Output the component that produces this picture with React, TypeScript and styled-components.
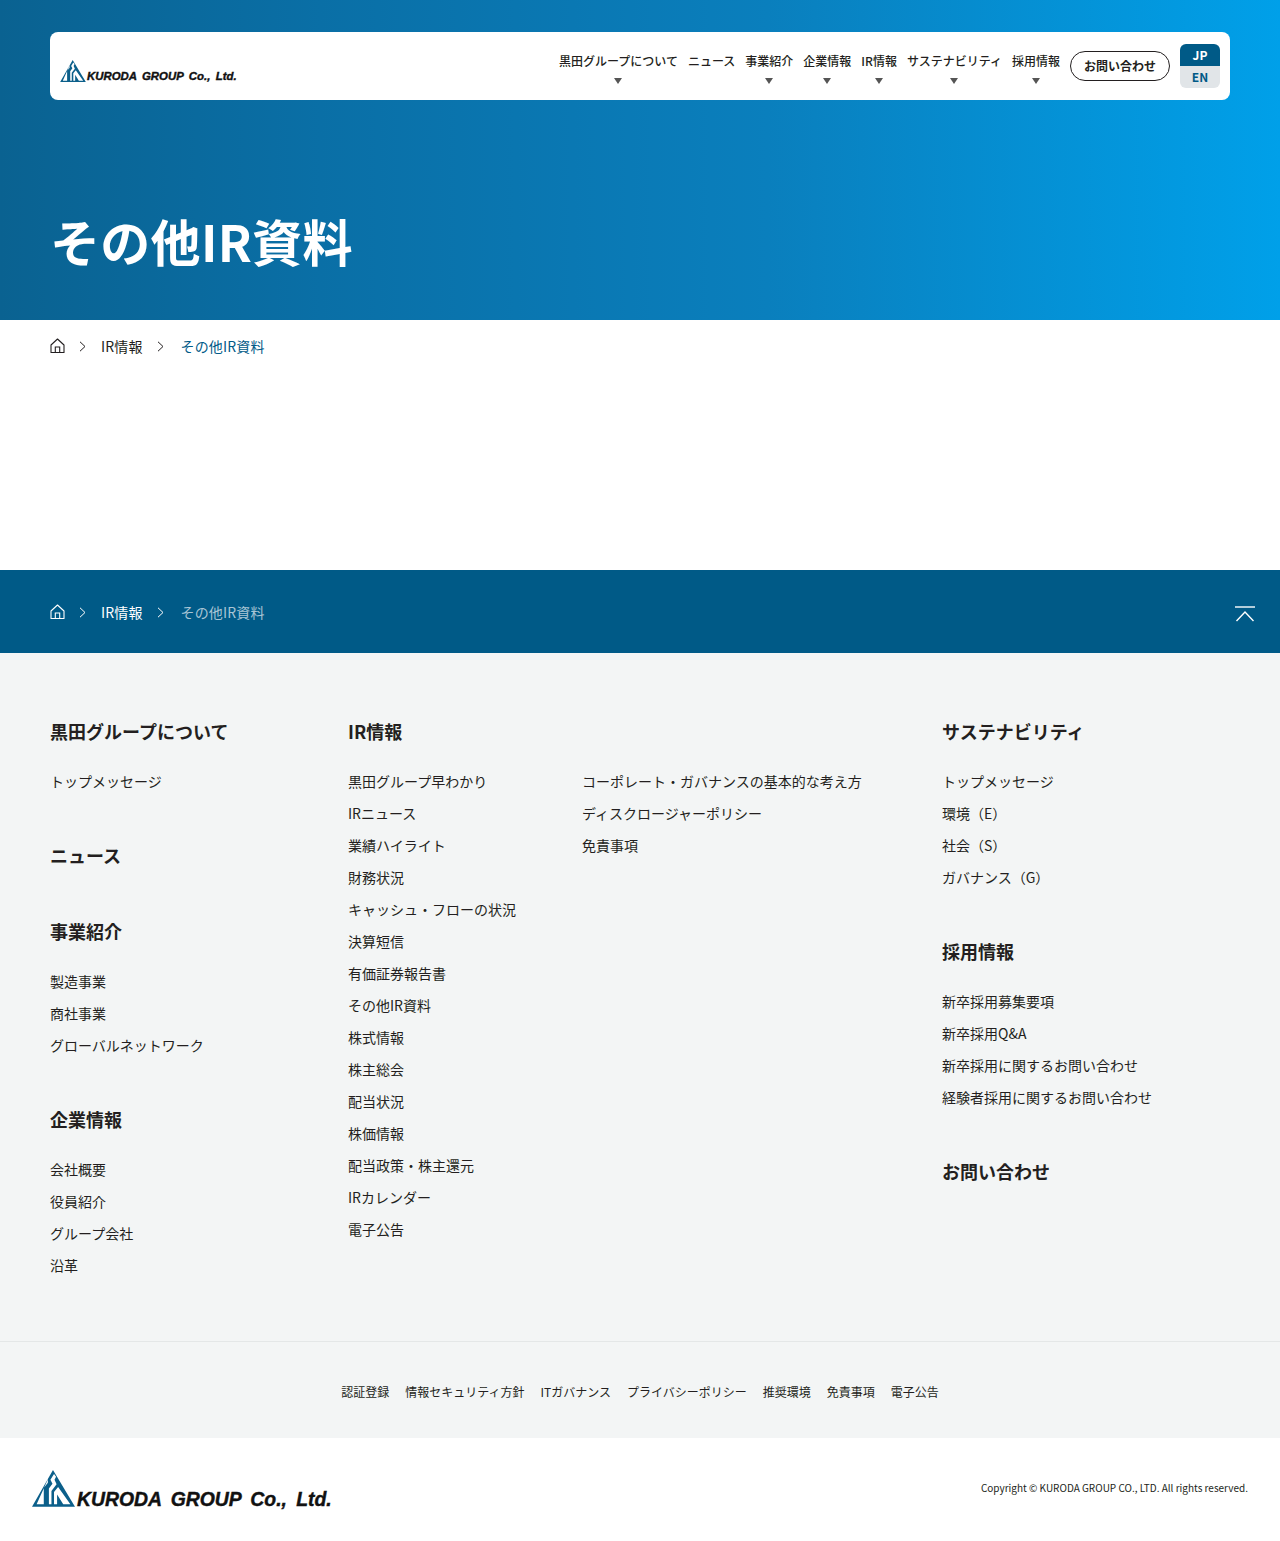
import React from 'react';
import styled, { createGlobalStyle } from 'styled-components';

const GlobalStyle = createGlobalStyle`
  html, body {
    margin: 0;
    padding: 0;
    background: #fff;
    font-family: 'Noto Sans CJK JP', 'Noto Sans', sans-serif;
    color: #231f20;
  }
  * {
    box-sizing: border-box;
  }
  ul {
    list-style: none;
    margin: 0;
    padding: 0;
  }
  a {
    color: inherit;
    text-decoration: none;
  }
`;

type NavItem = { label: string; hasMenu: boolean };

const navItems: NavItem[] = [
  { label: '黒田グループについて', hasMenu: true },
  { label: 'ニュース', hasMenu: false },
  { label: '事業紹介', hasMenu: true },
  { label: '企業情報', hasMenu: true },
  { label: 'IR情報', hasMenu: true },
  { label: 'サステナビリティ', hasMenu: true },
  { label: '採用情報', hasMenu: true }
];

type FooterSection = { title: string; links: string[] };

const leftSections: FooterSection[] = [
  { title: '黒田グループについて', links: ['トップメッセージ'] },
  { title: 'ニュース', links: [] },
  {
    title: '事業紹介',
    links: ['製造事業', '商社事業', 'グローバルネットワーク']
  },
  {
    title: '企業情報',
    links: ['会社概要', '役員紹介', 'グループ会社', '沿革']
  }
];

const irLinks = [
  '黒田グループ早わかり',
  'IRニュース',
  '業績ハイライト',
  '財務状況',
  'キャッシュ・フローの状況',
  '決算短信',
  '有価証券報告書',
  'その他IR資料',
  '株式情報',
  '株主総会',
  '配当状況',
  '株価情報',
  '配当政策・株主還元',
  'IRカレンダー',
  '電子公告'
];

const irLinks2 = [
  'コーポレート・ガバナンスの基本的な考え方',
  'ディスクロージャーポリシー',
  '免責事項'
];

const rightSections: FooterSection[] = [
  {
    title: 'サステナビリティ',
    links: ['トップメッセージ', '環境（E）', '社会（S）', 'ガバナンス（G）']
  },
  {
    title: '採用情報',
    links: [
      '新卒採用募集要項',
      '新卒採用Q&A',
      '新卒採用に関するお問い合わせ',
      '経験者採用に関するお問い合わせ'
    ]
  },
  { title: 'お問い合わせ', links: [] }
];

const subLinks = [
  '認証登録',
  '情報セキュリティ方針',
  'ITガバナンス',
  'プライバシーポリシー',
  '推奨環境',
  '免責事項',
  '電子公告'
];

function LogoMark({ size }: { size: number }) {
  return (
    <svg width={size} height={size * 0.857} viewBox="0 0 42 36" aria-hidden="true">
      <path
        fill="#0b5f8a"
        fillRule="evenodd"
        d="M20.5 0 L42 36 H0 Z M15.5 9 L4.5 33.5 H11.5 V17.5 L15.5 12.5 Z M21.5 4 L18 9.5 L20 13.5 L16.5 18 V33.5 H19 V20.5 L24 14 L22 9.5 L23.5 6.5 Z M25.5 16.5 L21.5 21.5 V33.5 H24.5 V24 L30.5 33.5 H37.5 Z"
      />
    </svg>
  );
}

function HomeIcon() {
  return (
    <svg width="15" height="16" viewBox="0 0 15 16" fill="none" stroke="currentColor" strokeWidth="1.1" aria-hidden="true">
      <path d="M1 7 L7.5 1 L14 7 V14.5 H1 Z" strokeLinejoin="round" />
      <path d="M5.3 14.5 V9 H9.7 V14.5" />
    </svg>
  );
}

function Chevron() {
  return (
    <svg width="7" height="11" viewBox="0 0 7 11" fill="none" stroke="currentColor" strokeWidth="1" aria-hidden="true">
      <path d="M1 0.8 L6 5.5 L1 10.2" />
    </svg>
  );
}

function Breadcrumb({ inverse }: { inverse?: boolean }) {
  return (
    <Crumbs $inverse={inverse}>
      <HomeLink href="#">
        <HomeIcon />
      </HomeLink>
      <CrumbSep>
        <Chevron />
      </CrumbSep>
      <a href="#">IR情報</a>
      <CrumbSep>
        <Chevron />
      </CrumbSep>
      <CrumbCurrent $inverse={inverse}>その他IR資料</CrumbCurrent>
    </Crumbs>
  );
}

function LinkSection({ title, links }: FooterSection) {
  const empty = links.length === 0;
  return (
    <Section $empty={empty}>
      <SectionTitle $empty={empty}>{title}</SectionTitle>
      {!empty && (
        <LinkList>
          {links.map((l) => (
            <li key={l}>
              <a href="#">{l}</a>
            </li>
          ))}
        </LinkList>
      )}
    </Section>
  );
}

export default function App() {
  return (
    <>
      <GlobalStyle />
      <Hero>
        <Header>
          <HeaderLogo href="#">
            <LogoMark size={26} />
            <LogoText $size={11.4}>KURODA GROUP Co., Ltd.</LogoText>
          </HeaderLogo>
          <Nav>
            {navItems.map((item) => (
              <NavLink key={item.label} href="#">
                <span>{item.label}</span>
                {item.hasMenu && <Caret />}
              </NavLink>
            ))}
            <ContactButton href="#">お問い合わせ</ContactButton>
            <LangSwitch>
              <LangItem $active>JP</LangItem>
              <LangItem>EN</LangItem>
            </LangSwitch>
          </Nav>
        </Header>
        <PageTitle>その他IR資料</PageTitle>
      </Hero>

      <TopCrumbs>
        <Breadcrumb />
      </TopCrumbs>

      <FooterBar>
        <Breadcrumb inverse />
        <ToTop href="#" aria-label="ページトップへ">
          <svg width="22" height="16" viewBox="0 0 22 16" fill="none" stroke="#fff" strokeWidth="1.4">
            <path d="M1 1 H21" />
            <path d="M2.5 15 L11 6 L19.5 15" />
          </svg>
        </ToTop>
      </FooterBar>

      <FooterNav>
        <NavGrid>
          <Column>
            {leftSections.map((s) => (
              <LinkSection key={s.title} {...s} />
            ))}
          </Column>
          <Column>
            <LinkSection title="IR情報" links={irLinks} />
          </Column>
          <Column>
            <Section>
              <SectionTitle>&nbsp;</SectionTitle>
              <LinkList>
                {irLinks2.map((l) => (
                  <li key={l}>
                    <a href="#">{l}</a>
                  </li>
                ))}
              </LinkList>
            </Section>
          </Column>
          <Column>
            {rightSections.map((s) => (
              <LinkSection key={s.title} {...s} />
            ))}
          </Column>
        </NavGrid>
        <SubNav>
          {subLinks.map((l) => (
            <a key={l} href="#">
              {l}
            </a>
          ))}
        </SubNav>
      </FooterNav>

      <FooterBottom>
        <FooterLogo href="#">
          <LogoMark size={43} />
          <LogoText $size={19.4} $drop={2}>
            KURODA GROUP Co., Ltd.
          </LogoText>
        </FooterLogo>
        <Copyright>Copyright © KURODA GROUP CO., LTD. All rights reserved.</Copyright>
      </FooterBottom>
    </>
  );
}

const Hero = styled.div`
  height: 320px;
  padding: 32px 50px 0;
  background: linear-gradient(90deg, #0a6291 0%, #0a6fa6 25%, #0a7fbd 60%, #00a0e9 100%);
`;

const Header = styled.header`
  display: flex;
  align-items: center;
  justify-content: space-between;
  height: 68px;
  padding: 0 10px;
  background: #fff;
  border-radius: 8px;
`;

const HeaderLogo = styled.a`
  display: flex;
  align-items: flex-end;
  gap: 1px;
  margin-top: 10px;
`;

const LogoText = styled.span<{ $size: number; $drop?: number }>`
  margin-bottom: ${(p) => -(p.$drop ?? 0)}px;
  font-family: 'Liberation Sans', Arial, sans-serif;
  font-size: ${(p) => p.$size}px;
  font-weight: 700;
  font-style: italic;
  line-height: 1;
  color: #111;
  white-space: pre;
  word-spacing: 0.2em;
  -webkit-text-stroke: 0.4px #111;
`;

const Nav = styled.nav`
  display: flex;
  align-items: center;
`;

const NavLink = styled.a`
  display: flex;
  flex-direction: column;
  align-items: center;
  height: 36px;
  margin: 8px 10px 0 0;
  font-size: 12px;
  font-weight: 500;
  line-height: 18px;
  white-space: nowrap;
  color: #231f20;
`;

const Caret = styled.i`
  display: block;
  width: 0;
  height: 0;
  margin-top: 8px;
  border-style: solid;
  border-width: 6px 4px 0;
  border-color: #555 transparent transparent;
`;

const ContactButton = styled.a`
  display: flex;
  align-items: center;
  justify-content: center;
  width: 100px;
  height: 30px;
  margin-right: 10px;
  padding-bottom: 2px;
  border: 1px solid #231f20;
  border-radius: 15px;
  font-size: 12px;
  font-weight: 700;
`;

const LangSwitch = styled.div`
  width: 40px;
  border-radius: 6px;
  overflow: hidden;
`;

const LangItem = styled.div<{ $active?: boolean }>`
  height: 22px;
  font-size: 12px;
  font-weight: 700;
  line-height: 22px;
  text-align: center;
  background: ${(p) => (p.$active ? '#005a87' : '#e1e5e8')};
  color: ${(p) => (p.$active ? '#fff' : '#005a87')};
`;

const PageTitle = styled.h1`
  margin: 108px 0 0;
  font-size: 50px;
  font-weight: 700;
  line-height: 64px;
  letter-spacing: 0.3px;
  color: #fff;
`;

const TopCrumbs = styled.div`
  height: 250px;
  padding: 15px 50px 0;
`;

const Crumbs = styled.div<{ $inverse?: boolean }>`
  display: flex;
  align-items: center;
  font-size: 14px;
  line-height: 22px;
  letter-spacing: 0.14px;
  color: ${(p) => (p.$inverse ? '#fff' : '#231f20')};
`;

const HomeLink = styled.a`
  display: flex;
  margin-top: -1px;
`;

const CrumbSep = styled.span`
  display: flex;
  width: 36px;
  padding-left: 14px;
  &:nth-of-type(n + 2) {
    width: 38px;
  }
`;

const CrumbCurrent = styled.span<{ $inverse?: boolean }>`
  color: ${(p) => (p.$inverse ? '#a9c5d5' : '#005a87')};
`;

const FooterBar = styled.div`
  display: flex;
  align-items: center;
  justify-content: space-between;
  height: 83px;
  padding: 1px 24px 0 50px;
  background: #005a87;
`;

const ToTop = styled.a`
  display: flex;
  margin-top: 3px;
`;

const FooterNav = styled.div`
  height: 785px;
  background: #f3f5f5;
`;

const NavGrid = styled.div`
  display: grid;
  grid-template-columns: 298px 234px 360px 1fr;
  height: 689px;
  padding: 64px 0 0 50px;
  border-bottom: 1px solid #e4e7e7;
`;

const Column = styled.div`
  display: flex;
  flex-direction: column;
`;

const Section = styled.section<{ $empty?: boolean }>`
  margin-bottom: ${(p) => (p.$empty ? 48 : 44)}px;
`;

const SectionTitle = styled.h3<{ $empty?: boolean }>`
  margin: 0 0 ${(p) => (p.$empty ? 0 : 20)}px;
  font-size: 18px;
  font-weight: 700;
  line-height: 28px;
  color: #231f20;
`;

const LinkList = styled.ul`
  font-size: 14px;
  line-height: 32px;
  color: #231f20;
`;

const SubNav = styled.div`
  display: flex;
  justify-content: center;
  gap: 16px;
  padding-top: 40px;
  font-size: 12px;
  line-height: 20px;
`;

const FooterBottom = styled.div`
  display: flex;
  align-items: center;
  justify-content: space-between;
  height: 103px;
  padding: 0 32px;
`;

const FooterLogo = styled.a`
  display: flex;
  align-items: flex-end;
  gap: 2px;
  margin-top: -2px;
`;

const Copyright = styled.p`
  margin: 0 0 4px;
  font-size: 10px;
  color: #231f20;
`;
